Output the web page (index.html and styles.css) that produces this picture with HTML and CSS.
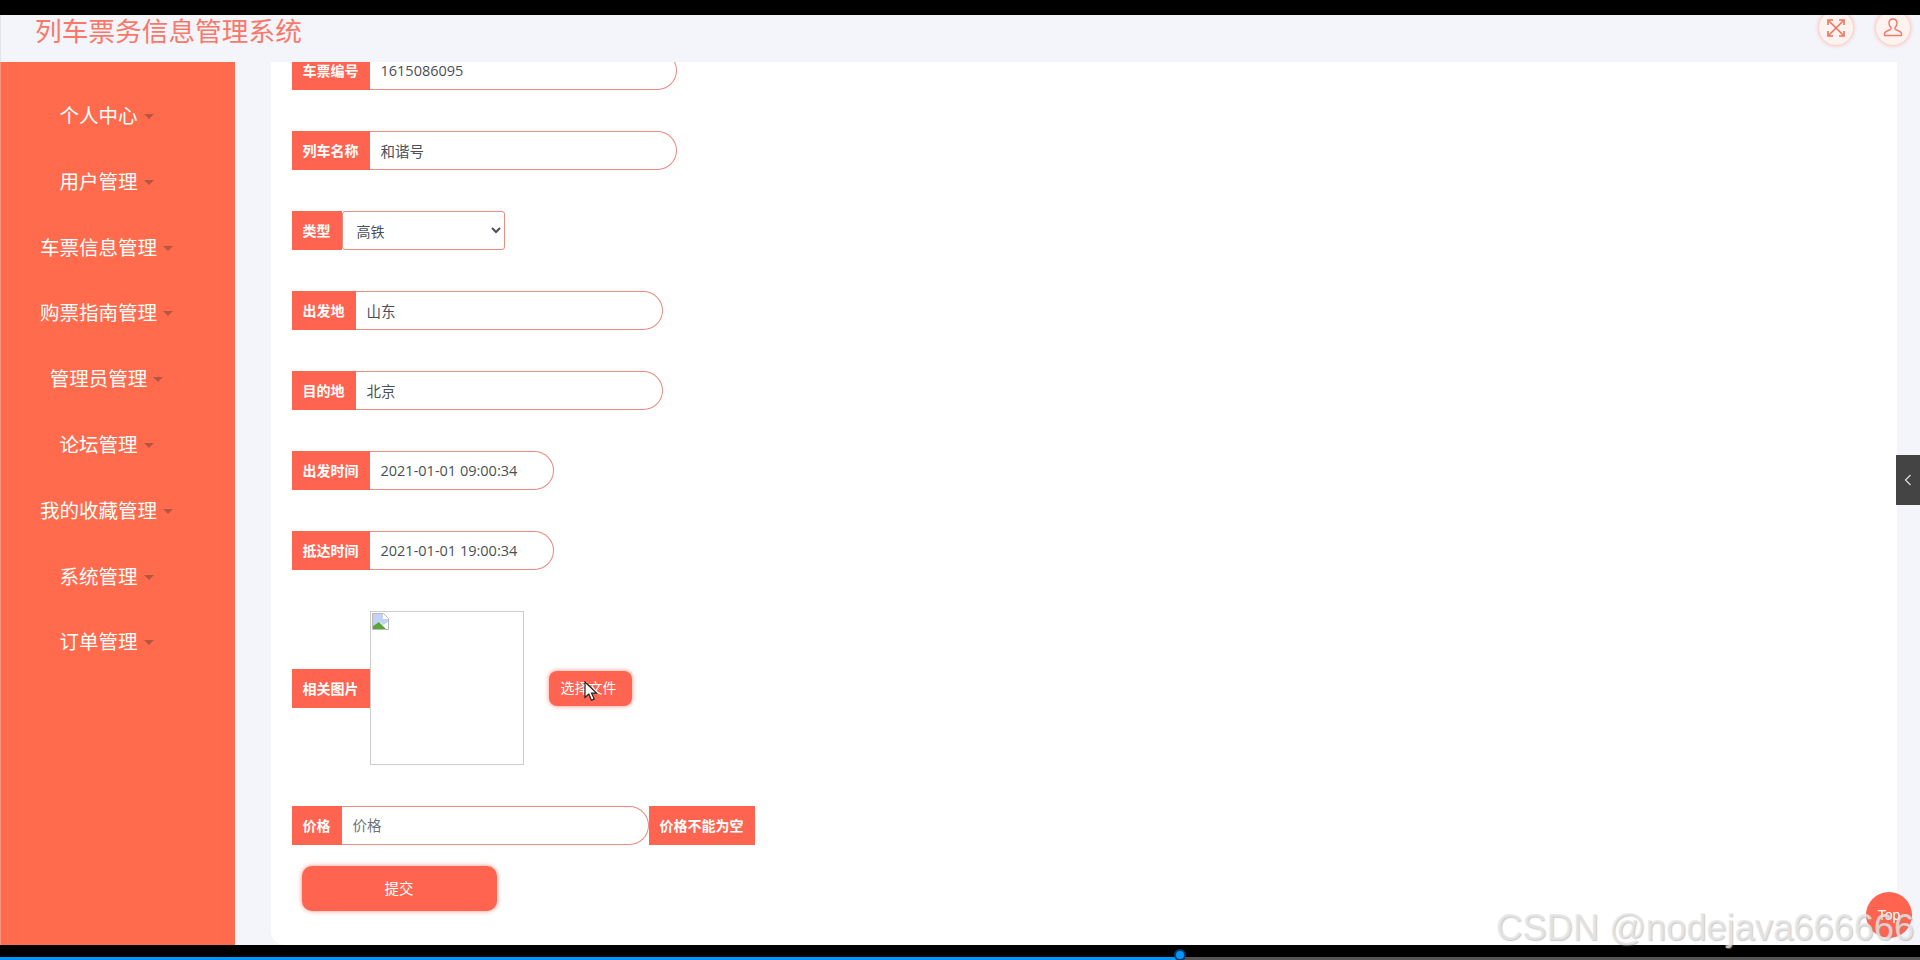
FILE: index.html
```html
<!DOCTYPE html>
<html lang="zh-CN">
<head>
    <meta charset="UTF-8">
    <title>列车票务信息管理系统</title>
    <link rel="stylesheet" href="styles.css">
</head>
<body>
    <div class="black-top"></div>

    <header class="header">
        <div class="title">列车票务信息管理系统</div>
        <div class="header-icons">
            <div class="round-icon">
                <svg width="20" height="20" viewBox="0 0 20 20" fill="none" stroke="#f0705c" stroke-width="1.5">
                    <path d="M3 3l14 14M17 3L3 17"/>
                    <path d="M2 7V2h5M13 2h5v5M18 13v5h-5M7 18H2v-5" stroke-width="1.6"/>
                </svg>
            </div>
            <div class="round-icon">
                <svg width="22" height="22" viewBox="0 0 22 22" fill="none" stroke="#ee7a68" stroke-width="1.4">
                    <path d="M11 2c-2.6 0-4 2-4 4.3 0 2 1 3.500 2 4.500v1.200c0 1-4.500 1.500-6 3.500-.7 1-.6 2.500-.4 3h16.800c.2-.5.3-2-.4-3-1.500-2-6-2.500-6-3.500v-1.200c1-1 2-2.500 2-4.500C15 4 13.600 2 11 2z"/>
                </svg>
            </div>
        </div>
    </header>

    <div class="main">
        <nav class="sidebar">
            <a class="menu-item">个人中心<span class="caret"></span></a>
            <a class="menu-item">用户管理<span class="caret"></span></a>
            <a class="menu-item">车票信息管理<span class="caret"></span></a>
            <a class="menu-item">购票指南管理<span class="caret"></span></a>
            <a class="menu-item">管理员管理<span class="caret"></span></a>
            <a class="menu-item">论坛管理<span class="caret"></span></a>
            <a class="menu-item">我的收藏管理<span class="caret"></span></a>
            <a class="menu-item">系统管理<span class="caret"></span></a>
            <a class="menu-item">订单管理<span class="caret"></span></a>
        </nav>

        <div class="content">
            <form class="card">
                <div class="form-row">
                    <label class="tag">车票编号</label>
                    <input class="field w-long" type="text" value="1615086095">
                </div>
                <div class="form-row">
                    <label class="tag">列车名称</label>
                    <input class="field w-long" type="text" value="和谐号">
                </div>
                <div class="form-row">
                    <label class="tag">类型</label>
                    <select class="field-select">
                        <option>高铁</option>
                    </select>
                </div>
                <div class="form-row">
                    <label class="tag">出发地</label>
                    <input class="field w-long" type="text" value="山东">
                </div>
                <div class="form-row">
                    <label class="tag">目的地</label>
                    <input class="field w-long" type="text" value="北京">
                </div>
                <div class="form-row">
                    <label class="tag">出发时间</label>
                    <input class="field w-time" type="text" value="2021-01-01 09:00:34">
                </div>
                <div class="form-row">
                    <label class="tag">抵达时间</label>
                    <input class="field w-time" type="text" value="2021-01-01 19:00:34">
                </div>
                <div class="form-row">
                    <label class="tag">相关图片</label>
                    <div class="image-box">
                        <svg width="17" height="17" viewBox="0 0 17 17">
                            <path d="M.5.500h11l5 5v11H.5z" fill="#fff" stroke="#b9b9b9"/>
                            <path d="M1 1h10v5h5v3l-5 3-3-3-7 4z" fill="#c3d2f2"/>
                            <path d="M1 13l6-4 4 4 3 3H1z" fill="#5aa63c"/>
                        </svg>
                    </div>
                    <button class="file-btn" type="button">选择文件</button>
                </div>
                <div class="form-row">
                    <label class="tag">价格</label>
                    <input class="field w-long" type="text" placeholder="价格">
                    <span class="tag">价格不能为空</span>
                </div>
                <button class="submit-btn" type="button">提交</button>
            </form>
        </div>
    </div>

    <div class="black-bottom">
        <div class="progress"><div class="knob"></div></div>
    </div>

    <!-- 浮在页面上的部分 -->
    <div class="side-tab">
        <svg width="8" height="12" viewBox="0 0 8 12" fill="none" stroke="#ddd" stroke-width="1.200"><path d="M6.500 1L1.500 6l5 5"/></svg>
    </div>
    <div class="to-top">Top</div>
    <div class="watermark">CSDN @nodejava666666</div>
    <svg class="cursor" width="14" height="21" viewBox="0 0 14 21">
        <path d="M1 1v15.500l3.800-3.400 2.600 6.200 2.800-1.200-2.700-6h5z" fill="#fff" stroke="#222" stroke-width="1.200"/>
    </svg>
</body>
</html>
```

FILE: styles.css
```css
* {
    box-sizing: border-box;
}
html, body {
    margin: 0;
    height: 100%;
    overflow: hidden;
}
body {
    display: flex;
    flex-direction: column;
    font-family: "Noto Sans CJK SC", "Noto Sans", sans-serif;
    background-color: #f4f5fb;
}
.black-top {
    height: 15px;
    background-color: #000;
    position: relative;
    z-index: 2;
}
.header {
    height: 47px;
    display: flex;
    justify-content: space-between;
    padding-left: 34px;
    border-left: 1px solid #e4e4ea;
}
.title {
    color: #f9786a;
    font-size: 26.700px;
    line-height: 30px;
}
.header-icons {
    display: flex;
    gap: 23px;
    margin-top: -4px;
    padding-right: 10px;
}
.round-icon {
    width: 34px;
    height: 34px;
    border-radius: 50%;
    background-color: #fff3f0;
    box-shadow: 0 0 5px #ffa596;
    display: flex;
    justify-content: center;
    align-items: center;
}
.main {
    flex: 1;
    display: flex;
    min-height: 0;
}
.sidebar {
    width: 235px;
    background-color: #ff6b4c;
    border-left: 1px solid #f5937c;
    padding-top: 20px;
    padding-right: 23px;
}
.menu-item {
    display: block;
    height: 65.800px;
    line-height: 65.800px;
    text-align: center;
    color: #fff;
    font-size: 19.500px;
}
.caret {
    display: inline-block;
    width: 0;
    height: 0;
    margin-left: 6px;
    vertical-align: 4px;
    border-top: 5px solid #b5563f;
    border-left: 5px solid transparent;
    border-right: 5px solid transparent;
}
.content {
    flex: 1;
    min-width: 0;
    padding: 0 23px 0 36px;
}
.card {
    height: 100%;
    background-color: #fff;
    border-radius: 0 0 14px 14px;
    padding-left: 20.500px;
    overflow: hidden;
}
.form-row {
    display: flex;
    align-items: center;
    margin-bottom: 41px;
}
.form-row:first-child {
    margin-top: -11px;
}
.tag {
    height: 39px;
    line-height: 38px;
    padding: 0 11px;
    background-color: #ff6450;
    color: #fff;
    font-size: 14px;
    font-weight: bold;
    white-space: nowrap;
}
.field {
    height: 39px;
    padding: 0 11px;
    font-family: "Open Sans", "Noto Sans CJK SC", sans-serif;
    font-size: 14.500px;
    color: #495057;
    background-color: #fff;
    border: 1px solid #ea8a80;
    border-left: none;
    border-radius: 0 20px 20px 0;
    outline: none;
}
.field::placeholder {
    color: #6c757d;
}
.w-long {
    width: 307px;
}
.w-time {
    width: 184px;
}
.field-select {
    width: 163px;
    height: 39px;
    padding: 0 10px;
    font-family: "Noto Sans CJK SC", sans-serif;
    font-size: 14px;
    color: #495057;
    background-color: #fff;
    border: 1px solid #ea8a80;
    border-radius: 3px;
    outline: none;
}
.image-box {
    width: 154px;
    height: 154px;
    padding: 1px;
    border: 1px solid #ccc;
    line-height: 0;
}
.file-btn {
    width: 83px;
    height: 35px;
    margin-left: 25px;
    padding: 0 3px 3px 0;
    border: none;
    border-radius: 8px;
    background-color: #ff6450;
    box-shadow: 0 0 5px #ff8f80;
    color: #fff;
    font-family: inherit;
    font-size: 14px;
}
.submit-btn {
    display: block;
    width: 195px;
    height: 45px;
    margin: -20px 0 0 10px;
    padding: 0 0 2px;
    border: none;
    border-radius: 10px;
    background-color: #ff6450;
    box-shadow: 0 0 5px #ff8f80;
    color: #fff;
    font-family: inherit;
    font-size: 14.500px;
}
.black-bottom {
    height: 15px;
    background-color: #000;
    display: flex;
    align-items: flex-end;
}
.progress {
    width: 100%;
    height: 3px;
    background: linear-gradient(to right, #0096ff 1180px, #555 1180px);
    position: relative;
}
.knob {
    position: absolute;
    left: 1174px;
    top: -8px;
    width: 12px;
    height: 12px;
    border-radius: 50%;
    background-color: #0096ff;
    border: 2px solid #0a3a66;
}
.side-tab {
    position: absolute;
    right: 0;
    top: 455px;
    width: 24px;
    height: 50px;
    background-color: #444;
    display: flex;
    justify-content: center;
    align-items: center;
}
.to-top {
    position: absolute;
    left: 1866px;
    top: 892px;
    width: 46px;
    height: 46px;
    border-radius: 50%;
    background-color: #ff6450;
    color: #fff;
    font-size: 14px;
    font-family: "Liberation Sans", sans-serif;
    text-align: center;
    line-height: 46px;
}
.watermark {
    position: absolute;
    left: 1496px;
    top: 908px;
    font-family: "Liberation Sans", sans-serif;
    font-size: 36.300px;
    line-height: 40px;
    color: rgba(232, 232, 232, 0.8);
    text-shadow: 1px 1px 1px rgba(150, 150, 150, 0.5);
    white-space: nowrap;
}
.cursor {
    position: absolute;
    left: 584px;
    top: 681px;
}
```
